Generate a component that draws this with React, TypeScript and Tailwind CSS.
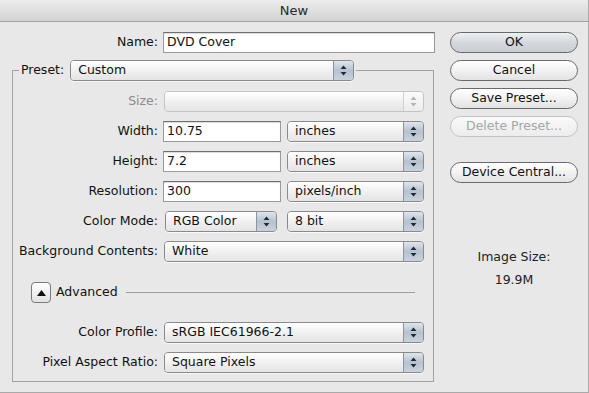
import React from "react";

const font = { fontFamily: '"DejaVu Sans", "Liberation Sans", sans-serif' };

function Arrows({ disabled = false }: { disabled?: boolean }) {
  const c = disabled ? "#b4b4b4" : "#1f2a3a";
  return (
    <svg width="7" height="11" viewBox="0 0 7 11">
      <path d="M3.5 0.5 L6.5 4 L0.5 4 Z" fill={c} />
      <path d="M0.5 7 L6.5 7 L3.5 10.5 Z" fill={c} />
    </svg>
  );
}

function Popup({ w, label, disabled = false }: { w: string; label: string; disabled?: boolean }) {
  return (
    <div
      className={`${w} h-[21px] flex rounded-[4px] border overflow-hidden ${
        disabled ? "border-[#c4c4c4]" : "border-[#8a8a8a] shadow-[0_1px_0_rgba(255,255,255,0.7)]"
      }`}
    >
      <div className="flex-1 flex items-center pl-[7px] text-[12.5px] bg-gradient-to-b from-[#ffffff] via-[#f1f1f1] to-[#e4e4e4]">
        {label}
      </div>
      <div
        className={`w-[20px] flex items-center justify-center border-l ${
          disabled
            ? "border-[#d0d0d0] bg-gradient-to-b from-[#fbfbfb] to-[#ececec]"
            : "border-[#8a94a3] bg-gradient-to-b from-[#dfe5ec] via-[#b7c2cf] to-[#c9d2dc]"
        }`}
      >
        <Arrows disabled={disabled} />
      </div>
    </div>
  );
}

function Field({ w, value }: { w: string; value: string }) {
  return (
    <div className={`${w} h-[21px] flex items-center pl-[3px] bg-white border border-[#9a9a9a] border-t-[#6f6f6f] text-[12.5px] shadow-[inset_0_1px_1px_rgba(0,0,0,0.15)]`}>
      {value}
    </div>
  );
}

function Button({ label, disabled = false, primary = false }: { label: string; disabled?: boolean; primary?: boolean }) {
  return (
    <div
      className={`w-[128px] h-[21px] flex items-center justify-center rounded-full border text-[12.5px] ${
        disabled
          ? "border-[#c3c3c3] text-[#a6a6a6] bg-gradient-to-b from-[#fafafa] to-[#ececec]"
          : primary
          ? "border-[#6a6a6a] bg-gradient-to-b from-[#eef0f2] via-[#d5d9de] to-[#c9ced4]"
          : "border-[#6a6a6a] bg-gradient-to-b from-[#ffffff] via-[#f2f2f2] to-[#e2e2e2]"
      }`}
    >
      {label}
    </div>
  );
}

function Row({ label, children, disabled = false }: { label: string; children: React.ReactNode; disabled?: boolean }) {
  return (
    <div className="flex items-center">
      <div className={`w-[150px] pr-[5px] text-right text-[12.5px] whitespace-nowrap ${disabled ? "text-[#8c8c8c]" : "text-[#111]"}`}>{label}</div>
      <div className="flex items-center gap-[6px]">{children}</div>
    </div>
  );
}

export default function App() {
  return (
    <div style={font} className="w-[589px] h-[393px] bg-[#e8e8e8] text-[#111] flex flex-col overflow-hidden border-r border-b border-[#a9a9a9]">
      <div className="h-[22px] flex items-center justify-center text-[13px] text-[#2a2a2a] bg-gradient-to-b from-[#ececec] to-[#d3d3d3] border-b border-[#a4a4a4]">
        New
      </div>
      <div className="flex">
        <div className="w-[438px] ml-[12px] flex flex-col">
          <div className="flex items-center mt-[10px]">
            <div className="w-[151px] pr-[5px] text-right text-[12.5px]">Name:</div>
            <Field w="w-[272px]" value="DVD Cover" />
          </div>
          <fieldset className="mt-[7px] w-[422px] border border-[#a2a2a2] pb-[8px]">
            <legend className="ml-[6px] px-[2px]">
              <div className="flex items-center gap-[6px] text-[12.5px]">
                <span>Preset:</span>
                <Popup w="w-[284px]" label="Custom" />
              </div>
            </legend>
            <div className="flex flex-col gap-[9px] pt-[10px]">
              <Row label="Size:" disabled>
                <div className="ml-[1px]"><Popup w="w-[260px]" label="" disabled /></div>
              </Row>
              <Row label="Width:">
                <Field w="w-[118px]" value="10.75" />
                <Popup w="w-[137px]" label="inches" />
              </Row>
              <Row label="Height:">
                <Field w="w-[118px]" value="7.2" />
                <Popup w="w-[137px]" label="inches" />
              </Row>
              <Row label="Resolution:">
                <Field w="w-[118px]" value="300" />
                <Popup w="w-[137px]" label="pixels/inch" />
              </Row>
              <Row label="Color Mode:">
                <div className="ml-[2px] mr-[4px]"><Popup w="w-[112px]" label="RGB Color" /></div>
                <Popup w="w-[137px]" label="8 bit" />
              </Row>
              <Row label="Background Contents:">
                <div className="ml-[1px]"><Popup w="w-[260px]" label="White" /></div>
              </Row>
            </div>
            <div className="flex items-center mt-[20px] ml-[18px] mr-[18px]">
              <div className="w-[20px] h-[21px] rounded-[4px] border border-[#7a7a7a] bg-gradient-to-b from-[#ffffff] to-[#e2e2e2] flex items-center justify-center">
                <svg width="9" height="6" viewBox="0 0 9 6"><path d="M4.5 0 L9 6 L0 6 Z" fill="#111" /></svg>
              </div>
              <span className="ml-[5px] text-[12.5px]">Advanced</span>
              <div className="flex-1 ml-[8px] h-px bg-[#9c9c9c]" />
            </div>
            <div className="flex flex-col gap-[9px] mt-[19px]">
              <Row label="Color Profile:">
                <div className="ml-[1px]"><Popup w="w-[260px]" label="sRGB IEC61966-2.1" /></div>
              </Row>
              <Row label="Pixel Aspect Ratio:">
                <div className="ml-[1px]"><Popup w="w-[260px]" label="Square Pixels" /></div>
              </Row>
            </div>
          </fieldset>
        </div>
        <div className="w-[128px] flex flex-col mt-[10px]">
          <div className="flex flex-col gap-[7px]">
            <Button label="OK" primary />
            <Button label="Cancel" />
            <Button label="Save Preset..." />
            <Button label="Delete Preset..." disabled />
          </div>
          <div className="mt-[25px]">
            <Button label="Device Central..." />
          </div>
          <div className="mt-[66px] flex flex-col items-center text-[12.5px] text-[#222] leading-[16px]">
            <span>Image Size:</span>
            <span className="mt-[7px]">19.9M</span>
          </div>
        </div>
      </div>
    </div>
  );
}
